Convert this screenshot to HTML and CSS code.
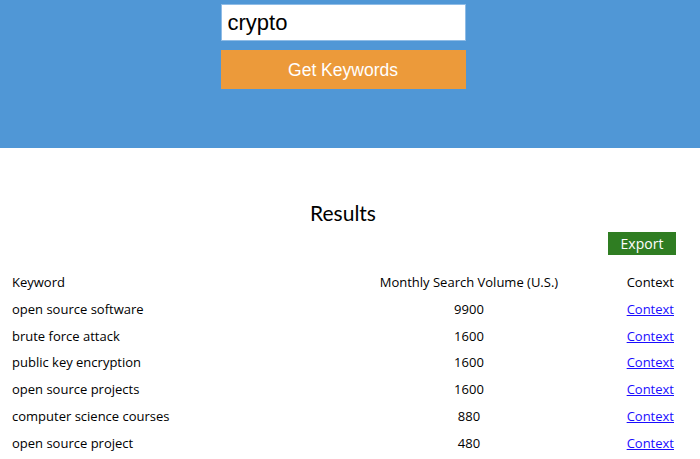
FILE: index.html
```html
<!DOCTYPE html>
<html>
<head>
<title>Keyword Finder</title>
<meta name="viewport" content="width=device-width, initial-scale=1">
<link rel="stylesheet" href="styles.css">
</head>
<body>
<div class="header">
  <form class="search">
    <input class="query" type="text" name="q" value="crypto">
    <button class="get" type="button">Get Keywords</button>
  </form>
</div>

<div class="results">
  <h2 class="title">Results</h2>
  <div class="tools"><button class="export" type="button">Export</button></div>
  <table class="kw">
    <tr>
      <th class="k">Keyword</th>
      <th class="v">Monthly Search Volume (U.S.)</th>
      <th class="c">Context</th>
    </tr>
    <tr><td class="k">open source software</td><td class="v">9900</td><td class="c"><a href="#">Context</a></td></tr>
    <tr><td class="k">brute force attack</td><td class="v">1600</td><td class="c"><a href="#">Context</a></td></tr>
    <tr><td class="k">public key encryption</td><td class="v">1600</td><td class="c"><a href="#">Context</a></td></tr>
    <tr><td class="k">open source projects</td><td class="v">1600</td><td class="c"><a href="#">Context</a></td></tr>
    <tr><td class="k">computer science courses</td><td class="v">880</td><td class="c"><a href="#">Context</a></td></tr>
    <tr><td class="k">open source project</td><td class="v">480</td><td class="c"><a href="#">Context</a></td></tr>
  </table>
</div>
</body>
</html>
```

FILE: styles.css
```css
body {
  margin: 0;
  font-family: "Open Sans", "Noto Sans", sans-serif;
  color: #111;
  background: #fff;
}

.header {
  background-color: #5097d6;
  height: 148px;
  padding: 4px 14px 0 0;
  box-sizing: border-box;
}

.search {
  width: 245px;
  margin: 0 auto;
}

.query {
  display: block;
  width: 245px;
  height: 37px;
  box-sizing: border-box;
  border: 1px solid #8fbce6;
  padding: 0 6px;
  font-family: "Liberation Sans", Arial, sans-serif;
  font-size: 22px;
  color: #000;
  outline: none;
}

.get {
  display: block;
  width: 245px;
  height: 39px;
  margin-top: 9px;
  padding: 1px 0 0;
  border: none;
  background-color: #ec9a3a;
  color: #fff;
  font-family: "Liberation Sans", Arial, sans-serif;
  font-size: 17.5px;
  cursor: pointer;
}

.results {
  margin: 0 22px 0 8px;
}

.title {
  margin: 0;
  padding-top: 51px;
  text-align: center;
  font-family: Lato, "Open Sans", sans-serif;
  font-weight: normal;
  font-size: 21px;
  line-height: 28px;
  color: #000;
}

.tools {
  text-align: right;
  margin-top: 5px;
}

.export {
  width: 68px;
  height: 23px;
  margin-right: 2px;
  border: none;
  background-color: #2f7d22;
  color: #fff;
  font-family: "Open Sans", "Noto Sans", sans-serif;
  font-size: 14px;
  padding: 0;
}

.kw {
  width: 670px;
  border-collapse: collapse;
  margin-top: 14px;
  font-size: 13px;
  color: #000;
}

.kw th, .kw td {
  font-weight: normal;
  padding: 3px 4px;
  line-height: 20.8px;
  white-space: nowrap;
}

.kw .k { width: 300px; text-align: left; }
.kw .v { width: 300px; text-align: center; }
.kw .c { text-align: center; }

.kw a { color: #1a0dff; }
```
